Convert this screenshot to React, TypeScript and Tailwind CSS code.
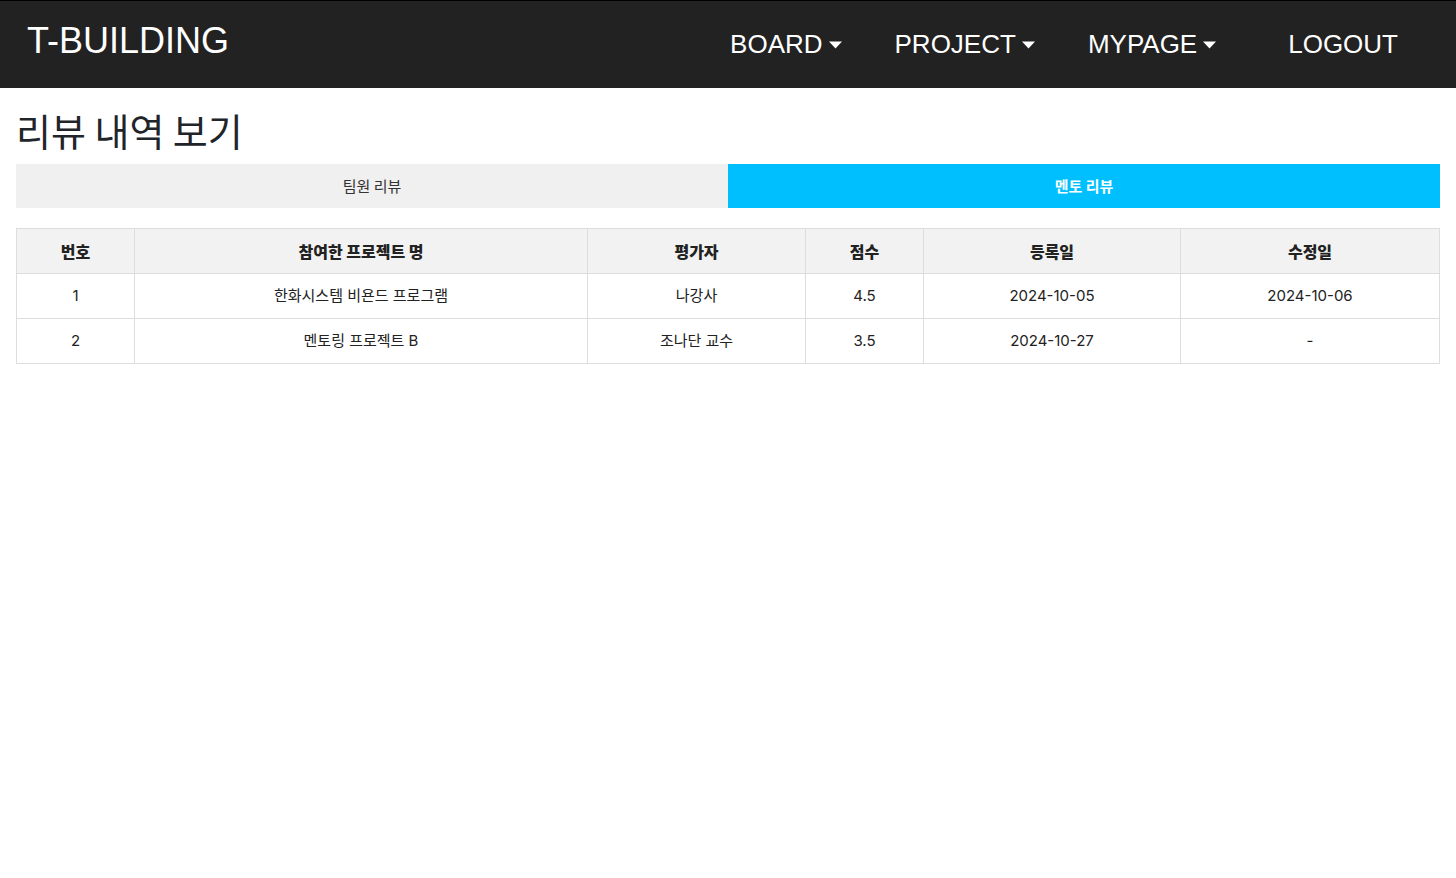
import React from 'react';

const columns = [
  { label: '번호', w: 'w-[118px]' },
  { label: '참여한 프로젝트 명', w: 'w-[453px]' },
  { label: '평가자', w: 'w-[218px]' },
  { label: '점수', w: 'w-[118px]' },
  { label: '등록일', w: 'w-[257px]' },
  { label: '수정일', w: '' },
];

const rows = [
  ['1', '한화시스템 비욘드 프로그램', '나강사', '4.5', '2024-10-05', '2024-10-06'],
  ['2', '멘토링 프로젝트 B', '조나단 교수', '3.5', '2024-10-27', '-'],
];

const Caret = () => (
  <svg width="13" height="8" viewBox="0 0 13 8" className="ml-[6px] mt-[2px]">
    <path d="M0 0.5h13L6.5 7.5z" fill="white" />
  </svg>
);

const NavItem: React.FC<{ label: string; dropdown?: boolean }> = ({ label, dropdown }) => (
  <div className="flex items-center">
    <span>{label}</span>
    {dropdown && <Caret />}
  </div>
);

export default function App() {
  return (
    <div className="min-h-screen bg-white font-['Inter','Noto_Sans_CJK_KR',sans-serif] text-[#212529]">
      {/* Navbar */}
      <nav className="h-[88px] bg-[#222222] border-t border-black flex items-center justify-between pl-[27px] pr-[58px] text-white font-['Liberation_Sans','Noto_Sans_CJK_KR',sans-serif]">
        <div className="text-[36px] leading-none -mt-[7px]">T-BUILDING</div>
        <div className="flex items-center text-[26px] leading-none -mt-[2px]">
          <NavItem label="BOARD" dropdown />
          <div className="ml-[53px]"><NavItem label="PROJECT" dropdown /></div>
          <div className="ml-[53px]"><NavItem label="MYPAGE" dropdown /></div>
          <div className="ml-[72px]"><NavItem label="LOGOUT" /></div>
        </div>
      </nav>

      <main className="px-4">
        <h1 className="text-[38px] leading-none mt-[23px] mb-[15px] font-normal font-['Noto_Sans_CJK_KR',sans-serif]">
          리뷰 내역 보기
        </h1>

        {/* Tabs */}
        <div className="flex h-[44px] text-[15px] font-['Noto_Sans_CJK_KR',sans-serif]">
          <button className="flex-1 bg-[#f0f0f0] text-[#333]">팀원 리뷰</button>
          <button className="flex-1 bg-[#00bfff] text-white font-bold">멘토 리뷰</button>
        </div>

        {/* Table */}
        <table className="w-full mt-[20px] border-collapse text-[15px] text-[#222] table-fixed">
          <thead>
            <tr className="bg-[#f2f2f2] h-[45px]">
              {columns.map((c) => (
                <th
                  key={c.label}
                  className={`border border-[#dddddd] text-[16px] font-black font-['Noto_Sans_CJK_KR',sans-serif] ${c.w}`}
                >
                  {c.label}
                </th>
              ))}
            </tr>
          </thead>
          <tbody>
            {rows.map((r) => (
              <tr key={r[0]} className="h-[45px]">
                {r.map((cell, i) => (
                  <td key={i} className="border border-[#dddddd] text-center">
                    {cell}
                  </td>
                ))}
              </tr>
            ))}
          </tbody>
        </table>
      </main>
    </div>
  );
}
